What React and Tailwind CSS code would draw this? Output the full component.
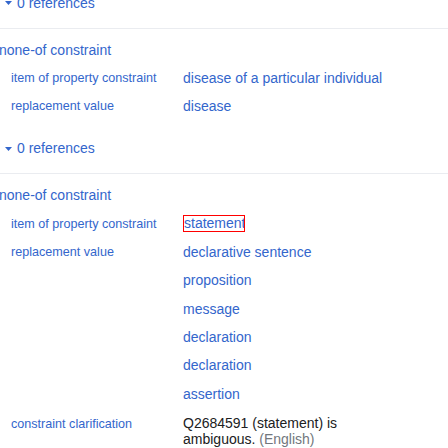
import React from 'react'

const Caret = () => (
  <svg width="7" height="4" viewBox="0 0 7 4" className="shrink-0">
    <polygon points="0,0 7,0 3.5,4" fill="#3366cc" />
  </svg>
)

const References = ({ className = '' }) => (
  <div className={`flex items-center h-[28px] text-[14px] text-[#3366cc] ${className}`}>
    <div className="ml-[5px] mr-[5px] flex items-center">
      <Caret />
    </div>
    <span>0 references</span>
  </div>
)

const Divider = ({ className = '' }) => (
  <div className={`h-px w-full bg-[#eaecf0] ${className}`} />
)

const Qualifier = ({ label, values, children }) => (
  <div className="flex">
    <div className="w-[183px] shrink-0 pl-[11px] h-[28.4px] flex items-center text-[12.6px] text-[#3366cc]">
      {label}
    </div>
    <div className="flex flex-col w-[215px]">
      {children}
      {values &&
        values.map((v, i) => (
          <div key={i} className="h-[28.4px] flex items-center text-[14px] text-[#3366cc]">
            {v}
          </div>
        ))}
    </div>
  </div>
)

const App = () => {
  return (
    <div className="w-[448px] h-[448px] overflow-hidden bg-white font-['Liberation_Sans',Arial,sans-serif]">
      <References className="-mt-[11px]" />
      <Divider className="mt-[11px]" />

      <div className="mt-[7px] h-[28px] flex items-center -ml-[1px] text-[14px] text-[#3366cc]">
        none-of constraint
      </div>
      <Qualifier label="item of property constraint" values={['disease of a particular individual']} />
      <Qualifier label="replacement value" values={['disease']} />

      <References className="mt-[14px]" />
      <Divider className="mt-[10px]" />

      <div className="mt-[8px] h-[28px] flex items-center -ml-[1px] text-[14px] text-[#3366cc]">
        none-of constraint
      </div>
      <Qualifier label="item of property constraint">
        <div className="h-[28.4px] flex items-center">
          <div className="w-[62px] h-[17px] border border-[#ff0000] overflow-hidden flex items-center text-[14px] text-[#3366cc] leading-[15px] whitespace-nowrap">
            statement
          </div>
        </div>
      </Qualifier>
      <Qualifier
        label="replacement value"
        values={['declarative sentence', 'proposition', 'message', 'declaration', 'declaration', 'assertion']}
      />
      <div className="flex">
        <div className="w-[183px] shrink-0 pl-[11px] pt-[7px] leading-[16px] text-[12.6px] text-[#3366cc]">
          constraint clarification
        </div>
        <div className="w-[215px] pt-[6px] text-[14px] leading-[16px] text-[#202122]">
          Q2684591 (statement) is ambiguous. <span className="text-[#72777d]">(English)</span>
        </div>
      </div>
    </div>
  )
}

export default App
